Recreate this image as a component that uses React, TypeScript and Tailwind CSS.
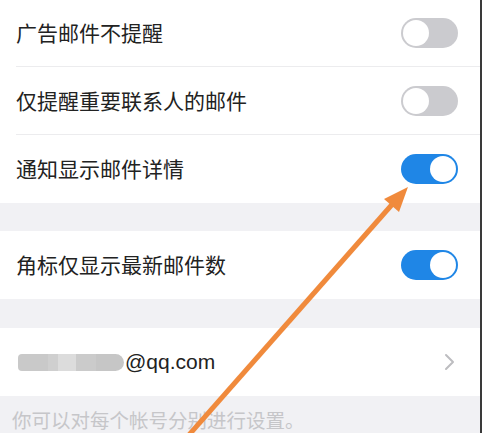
import React from 'react';

const font = { fontFamily: '"Noto Sans CJK SC", "Liberation Sans", sans-serif' };

function Toggle({ on }: { on: boolean }) {
  return (
    <div
      className={`w-[57px] h-[30px] rounded-full p-[2px] flex items-center ${
        on ? 'bg-[#1f86e6] justify-end' : 'bg-[#cbcbcf] justify-start'
      }`}
    >
      <div className="w-[26px] h-[26px] rounded-full bg-white" />
    </div>
  );
}

function Row({ label, on, last }: { label: string; on: boolean; last?: boolean }) {
  return (
    <div className="pl-4 bg-white">
      <div
        className={`h-[68px] flex items-center justify-between pr-[22px] ${
          last ? '' : 'border-b border-[#ececee]'
        }`}
      >
        <span className="text-[21px] text-[#222]">{label}</span>
        <Toggle on={on} />
      </div>
    </div>
  );
}

export default function App() {
  return (
    <div className="relative w-[482px] h-[433px] overflow-hidden bg-[#f1f1f4] border-r-2 border-[#3a3a3a]" style={font}>
      <div className="bg-white -mt-[1px]">
        <Row label="广告邮件不提醒" on={false} />
        <Row label="仅提醒重要联系人的邮件" on={false} />
        <Row label="通知显示邮件详情" on={true} last />
      </div>
      <div className="h-[28px]" />
      <Row label="角标仅显示最新邮件数" on={true} last />
      <div className="h-[29px]" />
      <div className="bg-white h-[68px] flex items-center justify-between pl-[18px] pr-[24px]">
        <div className="flex items-center">
          <div className="flex h-[17px] w-[106px] rounded-l-sm overflow-hidden">
            <div className="w-[30px] bg-[#c9c9c9]" />
            <div className="w-[10px] bg-[#cfcfcf]" />
            <div className="w-[18px] bg-[#dcdcdc]" />
            <div className="w-[20px] bg-[#cbcbcb]" />
            <div className="w-[28px] bg-[#c6c6c6] rounded-r-full" />
          </div>
          <span className="text-[21px] text-[#222] ml-[1px]" style={{ fontFamily: '"Liberation Sans", sans-serif' }}>
            @qq.com
          </span>
        </div>
        <svg width="12" height="18" viewBox="0 0 12 18" fill="none">
          <path d="M2 2l7 7-7 7" stroke="#bdbdc0" strokeWidth="2" strokeLinecap="round" strokeLinejoin="round" />
        </svg>
      </div>
      <div className="pl-3 pt-[9px] text-[19.5px] text-[#c6c6c9]">你可以对每个帐号分别进行设置。</div>

      <svg className="absolute inset-0 pointer-events-none" width="482" height="433" viewBox="0 0 482 433">
        <line x1="188" y1="436" x2="396" y2="200" stroke="#f08a3c" strokeWidth="5" />
        <polygon points="408,187 384,199 399,212" fill="#f08a3c" />
      </svg>
    </div>
  );
}
